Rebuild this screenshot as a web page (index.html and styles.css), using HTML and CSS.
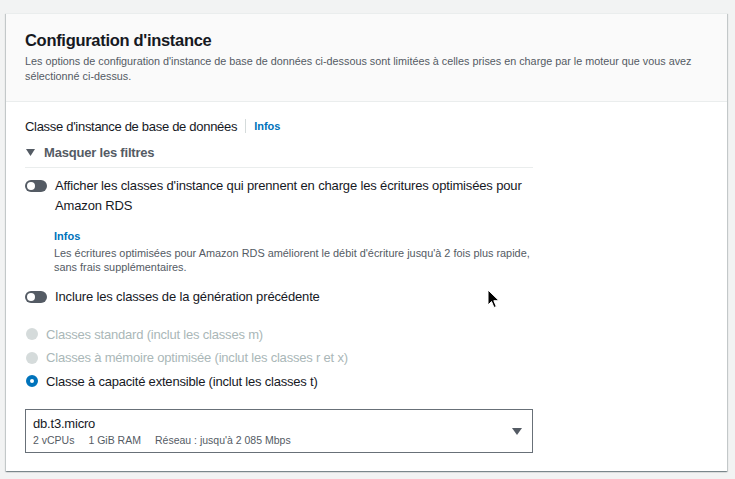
FILE: index.html
```html
<!DOCTYPE html>
<html lang="fr">
<head>
<meta charset="utf-8">
<link rel="stylesheet" href="styles.css">
</head>
<body>
<div class="card">
  <div class="card-header">
    <h2 class="title">Configuration d'instance</h2>
    <p class="desc">Les options de configuration d'instance de base de données ci-dessous sont limitées à celles prises en charge par le moteur que vous avez<br>sélectionné ci-dessus.</p>
  </div>
  <div class="card-body">
    <div class="col">
      <div class="label-row">
        <span class="label">Classe d'instance de base de données</span>
        <span class="sep"></span>
        <a class="info">Infos</a>
      </div>
      <div class="filters">
        <svg class="caret" width="9" height="7" viewBox="0 0 9 7"><path d="M0 0h9L4.5 7z" fill="#545b64"/></svg>
        <span>Masquer les filtres</span>
      </div>
      <div class="toggle-row first">
        <span class="toggle"><span class="knob"></span></span>
        <span class="toggle-text">Afficher les classes d'instance qui prennent en charge les écritures optimisées pour<br>Amazon RDS</span>
      </div>
      <div class="hint">
        <a class="info small">Infos</a>
        <p class="hint-text">Les écritures optimisées pour Amazon RDS améliorent le débit d'écriture jusqu'à 2 fois plus rapide,<br>sans frais supplémentaires.</p>
      </div>
      <div class="toggle-row second">
        <span class="toggle"><span class="knob"></span></span>
        <span class="toggle-text">Inclure les classes de la génération précédente</span>
      </div>
      <div class="radios">
        <div class="radio disabled"><span class="dot"></span><span>Classes standard (inclut les classes m)</span></div>
        <div class="radio disabled"><span class="dot"></span><span>Classes à mémoire optimisée (inclut les classes r et x)</span></div>
        <div class="radio checked"><span class="dot"></span><span>Classe à capacité extensible (inclut les classes t)</span></div>
      </div>
      <div class="select">
        <div class="select-main">
          <div class="select-value">db.t3.micro</div>
          <div class="select-tags">
            <span>2 vCPUs</span>
            <span>1 GiB RAM</span>
            <span>Réseau : jusqu'à 2 085 Mbps</span>
          </div>
        </div>
        <svg class="select-caret" width="10" height="7" viewBox="0 0 10 7"><path d="M0 0h10L5 7z" fill="#545b64"/></svg>
      </div>
    </div>
  </div>
</div>
<svg class="cursor" width="13" height="20" viewBox="0 0 13 20"><path d="M1 1v15l3.5-3.5 2.5 6 2.3-1-2.5-5.8H12z" fill="#000" stroke="#fff" stroke-width="1"/></svg>
</body>
</html>
```
FILE: styles.css
```css
* { box-sizing: border-box; }
html, body { margin: 0; padding: 0; }
body {
  background: #f2f3f3;
  font-family: "Liberation Sans", Arial, sans-serif;
  color: #16191f;
  padding: 13px 8px 8px 6px;
  width: 735px;
  height: 479px;
  position: relative;
  overflow: hidden;
}
.card {
  width: 721px;
  height: 458px;
  background: #fff;
  box-shadow: 0 1px 1px 0 rgba(0,28,36,.3), 1px 1px 1px 0 rgba(0,28,36,.15), -1px 1px 1px 0 rgba(0,28,36,.15);
  border-top: 1px solid #eaeded;
}
.card-header {
  background: #fafafa;
  border-bottom: 1px solid #eaeded;
  padding: 16px 19px 0 19px;
  height: 88px;
}
.title {
  margin: 0;
  font-size: 16.5px;
  line-height: 20px;
  font-weight: bold;
  letter-spacing: -0.3px;
  color: #16191f;
}
.desc {
  margin: 4px 0 0 0;
  font-size: 10.8px;
  line-height: 15px;
  color: #545b64;
}
.card-body { padding: 14px 19px 0 19px; }
.col { width: 508px; }
.label-row {
  display: flex;
  align-items: center;
  height: 20px;
  font-size: 13px;
  letter-spacing: -0.3px;
}
.sep {
  width: 1px;
  height: 14px;
  background: #d5dbdb;
  margin: 0 8px 0 8px;
}
.info {
  color: #0073bb;
  font-weight: bold;
  font-size: 11px;
  letter-spacing: 0;
}
.filters {
  margin-top: 6px;
  display: flex;
  align-items: center;
  gap: 9px;
  height: 20px;
  font-size: 13px;
  font-weight: bold;
  color: #545b64;
  letter-spacing: -0.2px;
  border-bottom: 1px solid #eaeded;
  box-sizing: content-box;
  padding-bottom: 5px;
}
.caret { margin-left: 1px; }
.toggle-row {
  display: flex;
  align-items: flex-start;
  gap: 8px;
  font-size: 13px;
  line-height: 20px;
  letter-spacing: -0.15px;
}
.toggle-row.first { margin-top: 8px; }
.toggle {
  flex: none;
  width: 22px;
  height: 12px;
  border-radius: 6px;
  background: #545b64;
  margin: 4px 0 0 0;
  position: relative;
}
.knob {
  position: absolute;
  left: 2px;
  top: 2px;
  width: 8px;
  height: 8px;
  border-radius: 50%;
  background: #fff;
}
.hint {
  margin: 12px 0 0 29px;
}
.hint .info { display: block; line-height: 16px; }
.hint-text {
  margin: 2px 0 0 0;
  font-size: 10.9px;
  line-height: 14px;
  color: #545b64;
}
.toggle-row.second { margin-top: 13px; }
.radios { margin-top: 17px; display: flex; flex-direction: column; gap: 3.5px; }
.radio {
  display: flex;
  align-items: center;
  gap: 8px;
  height: 20px;
  font-size: 13px;
  letter-spacing: -0.2px;
}
.radio .dot {
  flex: none;
  width: 12px;
  height: 12px;
  border-radius: 50%;
  margin-left: 1px;
}
.radio.disabled { color: #aab7b8; }
.radio.disabled .dot { background: #d5dbdb; }
.radio.checked .dot { border: 4px solid #0073bb; background: #fff; }
.select {
  margin-top: 18px;
  height: 44px;
  border: 1px solid #687078;
  display: flex;
  align-items: center;
  justify-content: space-between;
  padding: 0 10px 0 7px;
}
.select-value { font-size: 13px; line-height: 18px; letter-spacing: -0.2px; }
.select-tags {
  display: flex;
  gap: 14px;
  font-size: 10.5px;
  line-height: 15px;
  color: #545b64;
}
.select-caret { margin-top: 1px; }
.cursor { position: absolute; left: 487px; top: 289px; }
```
